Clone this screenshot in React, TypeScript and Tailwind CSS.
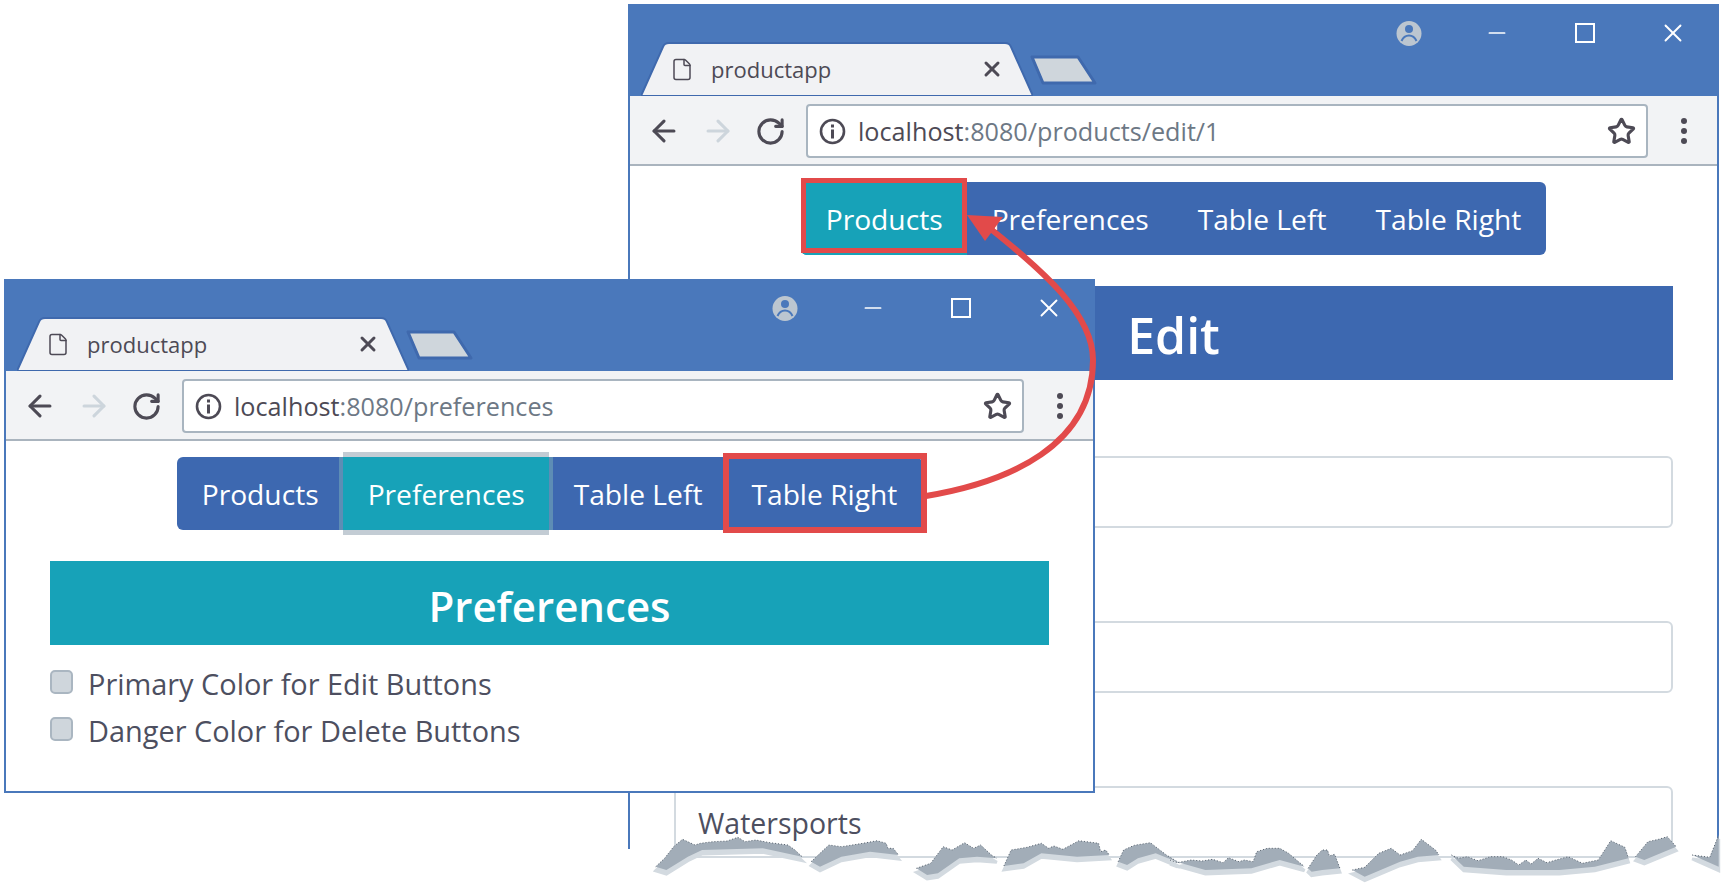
import React from "react";
import { ArrowLeft, ArrowRight, RotateCw, Star, X, Minus, File } from "lucide-react";

type Seg = { top: number[][]; low: number[][] };

const z6 = (p: number[]) => [620 + p[0] / 2.8, 760 + p[1] / 3];
const z7 = (p: number[]) => [1170 + p[0] / 2.825, 760 + p[1] / 3];

const raw6: Seg[] = [
  { top: [[100,320],[125,295],[150,260],[175,238],[210,255],[225,250],[260,245],[300,243],[330,232],[350,245],[380,240],[420,248],[470,255],[490,270],[510,290]], low: [[400,265],[230,270],[190,290],[130,330]] },
  { top: [[535,305],[560,280],[585,255],[620,260],[680,250],[720,242],[745,250],[750,265],[765,265],[780,285]], low: [[700,275],[620,290],[560,320]] },
  { top: [[830,325],[870,310],[905,260],[930,270],[965,248],[990,265],[1010,255],[1040,285],[1055,295]], low: [[1000,290],[950,295],[890,340],[860,345]] },
  { top: [[1075,318],[1095,270],[1140,262],[1180,250],[1200,265],[1215,258],[1240,268],[1285,242],[1340,250],[1345,275],[1360,270],[1370,285]], low: [[1280,290],[1180,280],[1130,310]] },
  { top: [[1395,305],[1410,270],[1440,256],[1485,248],[1530,285],[1568,310]], low: [[1500,280],[1450,295],[1420,315]] },
];
const raw7: Seg[] = [
  { top: [[0,300],[20,308],[60,300],[90,303],[120,298],[150,308],[165,293],[195,305],[210,300],[235,305],[245,275],[275,265],[310,265],[335,280],[380,320]], low: [[310,300],[230,325],[100,330]] },
  { top: [[390,325],[415,285],[430,270],[445,270],[450,288],[465,283],[480,325]], low: [[430,330],[400,335]] },
  { top: [[515,330],[550,322],[590,280],[625,265],[650,285],[685,272],[710,238],[750,270],[760,285]], low: [[700,290],[650,305],[550,350]] },
  { top: [[795,285],[815,295],[840,290],[870,302],[905,290],[940,290],[965,300],[985,315],[1005,300],[1020,312],[1040,295],[1065,308],[1090,300],[1125,290],[1165,310],[1210,300],[1245,242],[1285,262],[1295,295]], low: [[1200,320],[1100,330],[950,330],[830,320]] },
  { top: [[1315,290],[1350,245],[1380,238],[1405,230],[1430,260]], low: [[1340,300]] },
  { top: [[1475,285],[1525,292],[1550,225]], low: [[1550,320]] },
];
const segs: Seg[] = [
  ...raw6.map((s) => ({ top: s.top.map(z6), low: s.low.map(z6) })),
  ...raw7.map((s) => ({ top: s.top.map(z7), low: s.low.map(z7) })),
];
const str = (p: number[][]) => p.map((q) => `${q[0].toFixed(1)},${q[1].toFixed(1)}`).join(" ");

function UserIcon() {
  return (
    <svg width="26" height="27" viewBox="0 0 26 27" fill="none">
      <circle cx="13" cy="13.5" r="12.5" fill="#bcc6d0" />
      <circle cx="13" cy="9" r="4" fill="#4a78bb" />
      <path d="M5.500 21c1.500-3.500 4-5.500 7.500-5.500s6 2 7.500 5.500" stroke="#4a78bb" strokeWidth="2" />
    </svg>
  );
}

function InfoIcon() {
  return (
    <svg width="27" height="27" viewBox="0 0 27 27" fill="none">
      <circle cx="13.5" cy="13.5" r="11.5" stroke="#4d4a55" strokeWidth="2.6" />
      <rect x="12" y="6.500" width="3" height="3" fill="#4d4a55" />
      <rect x="12" y="11.500" width="3" height="9" fill="#4d4a55" />
    </svg>
  );
}

function Kebab() {
  return (
    <div className="flex flex-col items-center gap-[4px]">
      <div className="w-[6px] h-[6px] rounded-full bg-[#4d4a55]" />
      <div className="w-[6px] h-[6px] rounded-full bg-[#4d4a55]" />
      <div className="w-[6px] h-[6px] rounded-full bg-[#4d4a55]" />
    </div>
  );
}

function Chrome({ host, path }: { host: string; path: string }) {
  return (
    <>
      <div className="relative h-[92px] bg-[#4a78bb] shrink-0">
        <div className="flex justify-end h-[38px] pt-[6px] items-start">
          <div className="w-[88px] h-[46px] flex items-center justify-center"><UserIcon /></div>
          <div className="w-[88px] h-[46px] flex items-center justify-center"><Minus size={26} color="#ffffff" strokeWidth={1.6} /></div>
          <div className="w-[88px] h-[46px] flex items-center justify-center"><div className="w-[20px] h-[20px] border-2 border-white" /></div>
          <div className="w-[88px] h-[46px] flex items-center justify-center"><X size={30} color="#ffffff" strokeWidth={1.5} /></div>
        </div>
        <div className="flex items-end h-[54px]">
          <div className="relative ml-[11px] w-[392px] h-[54px] flex items-center">
            <svg className="absolute inset-0" width="392" height="54" viewBox="0 0 392 54" fill="none">
              <path d="M0 54 L22 5 C23 2 25 1 28 1 L364 1 C367 1 369 2 370 5 L392 54 Z" fill="#f1f2f4" stroke="#3f69ad" strokeWidth="2" />
            </svg>
            <div className="relative flex items-center w-full h-full">
              <div className="ml-[29px] w-[24px] flex justify-center"><File size={31} color="#4d4a55" strokeWidth={1.5} /></div>
              <span className="ml-[17px] text-[22px] leading-none text-[#4d4a55]">productapp</span>
              <X size={24} color="#4d4a55" strokeWidth={3} className="ml-[149px]" />
            </div>
          </div>
          <div className="ml-[-4px] mb-[10px] relative">
            <svg width="69" height="32" viewBox="0 0 69 32" fill="none">
              <path d="M3 3 L49 3 L66 29 L14 29 Z" fill="#cfd6dc" stroke="#3f69ad" strokeWidth="3" strokeLinejoin="round" />
            </svg>
          </div>
        </div>
      </div>
      <div className="h-[70px] shrink-0 bg-[#f2f3f5] border-b-2 border-[#aab4be] flex items-center pt-[2px]">
        <div className="w-[57px] flex justify-end pr-[6px]"><ArrowLeft size={34} color="#4d4a55" strokeWidth={2.2} /></div>
        <div className="w-[62px] flex justify-center"><ArrowRight size={34} color="#cdd5dc" strokeWidth={2.2} /></div>
        <div className="w-[42px] flex justify-center"><RotateCw size={31} color="#4d4a55" strokeWidth={2.4} /></div>
        <div className="ml-[15px] w-[842px] h-[54px] bg-white border-2 border-[#a9b5c0] rounded-[4px] flex items-center pl-[11px] pr-[10px]">
          <InfoIcon />
          <div className="ml-[12px] text-[25.2px] leading-none whitespace-nowrap text-[#6d7885] pt-[2px]">
            <span className="text-[#4d4a55]">{host}</span>
            {path}
          </div>
          <div className="ml-auto"><Star size={29} color="#4d4a55" strokeWidth={2.6} /></div>
        </div>
        <div className="ml-[33px]"><Kebab /></div>
      </div>
    </>
  );
}

type Item = { label: string; active?: boolean; red?: "products" | "right"; ring?: boolean };

function Nav({ items }: { items: Item[] }) {
  return (
    <div className="mt-[16px] flex justify-center">
      <div className="flex h-[73px] rounded-[6px] bg-[#3d68b0] text-white text-[28.2px] leading-none">
        {items.map((it) => (
          <div
            key={it.label}
            className={`relative flex items-center px-[24.5px] pt-[2px] ${it.active ? "bg-[#17a2b8]" : ""} ${it.label === "Products" ? "rounded-l-[6px]" : ""} ${it.ring ? "shadow-[0_-5px_0_#c3ccd4,0_5px_0_#c3ccd4,-4px_0_0_#5d8db5,4px_0_0_#5d8db5]" : ""}`}
          >
            {it.label}
            {it.red === "products" && <div className="absolute left-0 right-0 top-[-4px] bottom-[2px] border-[5px] border-[#e24a4a]" />}
            {it.red === "right" && <div className="absolute left-[-4px] right-[-5px] top-[-4px] bottom-[-3px] border-[6px] border-[#e24a4a]" />}
          </div>
        ))}
      </div>
    </div>
  );
}

const Input = ({ text }: { text?: string }) => (
  <div className="h-[72px] shrink-0 border-2 border-[#d3dae0] rounded-[6px] bg-white flex items-center px-[22px] text-[28.5px] text-[#4d4f60] leading-none pt-[2px]">
    {text}
  </div>
);

export default function App() {
  return (
    <div className="relative w-[1725px] h-[892px] bg-white overflow-hidden [font-family:'Open_Sans',sans-serif]">
      {/* back window */}
      <div className="absolute left-[628px] top-[4px] w-[1091px] h-[845px] bg-white border-x-2 border-[#4a78bb] flex flex-col">
        <Chrome host="localhost" path=":8080/products/edit/1" />
        <Nav
          items={[
            { label: "Products", active: true, red: "products" },
            { label: "Preferences" },
            { label: "Table Left" },
            { label: "Table Right" },
          ]}
        />
        <div className="mt-[31px] mx-[44px] flex flex-col">
          <div className="h-[94px] shrink-0 bg-[#3d68b0] flex items-center justify-center text-white font-semibold text-[50px] leading-none pt-[4px]">Edit</div>
          <div className="mt-[76px] flex flex-col gap-[93px]">
            <Input />
            <Input />
            <Input text="Watersports" />
          </div>
        </div>
      </div>

      {/* front window */}
      <div className="absolute left-[4px] top-[279px] w-[1091px] h-[514px] bg-white border-x-2 border-b-2 border-[#4a78bb] flex flex-col">
        <Chrome host="localhost" path=":8080/preferences" />
        <Nav
          items={[
            { label: "Products" },
            { label: "Preferences", active: true, ring: true },
            { label: "Table Left" },
            { label: "Table Right", red: "right" },
          ]}
        />
        <div className="mt-[31px] mx-[44px] flex flex-col">
          <div className="h-[84px] bg-[#17a2b8] flex items-center justify-center text-white font-semibold text-[42px] leading-none pt-[6px]">Preferences</div>
          <div className="mt-[25px] flex flex-col gap-[23px] text-[28.9px] leading-none text-[#4d4f60]">
            <div className="flex items-center h-[24px]">
              <div className="w-[23px] h-[24px] rounded-[5px] bg-[#cfd6dc] border-2 border-[#aab6c1]" />
              <span className="ml-[15px] pt-[5px]">Primary Color for Edit Buttons</span>
            </div>
            <div className="flex items-center h-[24px]">
              <div className="w-[23px] h-[24px] rounded-[5px] bg-[#cfd6dc] border-2 border-[#aab6c1]" />
              <span className="ml-[15px] pt-[4px]">Danger Color for Delete Buttons</span>
            </div>
          </div>
        </div>
      </div>

      {/* red arrow */}
      <svg className="absolute inset-0 pointer-events-none" width="1725" height="892" viewBox="0 0 1725 892" fill="none">
        <path d="M926 496 C1010 482 1093 445 1093 360 C1093 315 1045 272 987 226" stroke="#e24a4a" strokeWidth="6" />
        <path d="M967 215 L1003 217 L985 241 Z" fill="#e24a4a" />
      </svg>

      {/* torn edge */}
      <svg className="absolute inset-0 pointer-events-none" width="1725" height="892" viewBox="0 0 1725 892" fill="none">
        <rect x="640" y="858" width="1085" height="34" fill="#ffffff" />
        <rect x="1660" y="850" width="65" height="42" fill="#ffffff" />
        {segs.map((s, i) => {
          const all = str([...s.top, ...s.low]);
          return (
            <g key={i}>
              <polygon points={all} fill="#d3dae0" stroke="#d3dae0" strokeWidth="3" transform="translate(0 4)" />
              <polygon points={all} fill="#a2adb8" />
              <polyline points={str(s.top)} stroke="#55606c" strokeWidth="1" strokeDasharray="1 2" />
            </g>
          );
        })}
      </svg>
    </div>
  );
}
